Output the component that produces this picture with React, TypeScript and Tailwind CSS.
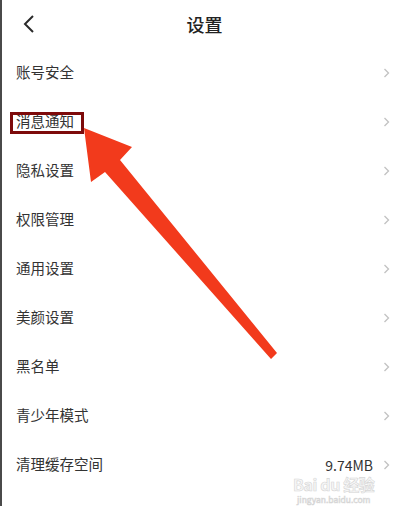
const items = [
  "账号安全",
  "消息通知",
  "隐私设置",
  "权限管理",
  "通用设置",
  "美颜设置",
  "黑名单",
  "青少年模式",
  "清理缓存空间",
  "关于我们",
];

function Chevron() {
  return (
    <svg width="7" height="10" viewBox="0 0 7 10" className="shrink-0">
      <path d="M1.5 1 L5.5 5 L1.5 9" fill="none" stroke="#c2c2c2" strokeWidth="1.3" />
    </svg>
  );
}

export default function App() {
  return (
    <div
      className="relative w-[407px] h-[506px] overflow-hidden bg-white border-l-2 border-[#4a4a4a] text-[#333]"
      style={{ fontFamily: '"Noto Sans CJK SC", "Noto Sans", sans-serif' }}
    >
      {/* header */}
      <div className="relative h-[48px] flex items-center justify-center">
        <svg width="14" height="20" viewBox="0 0 14 20" className="absolute left-[20px] top-[14px]">
          <path d="M11 2 L3 10 L11 18" fill="none" stroke="#2a2a2a" strokeWidth="2" />
        </svg>
        <span className="text-[18px] font-medium text-[#222] pt-[1px]">设置</span>
      </div>

      {/* list */}
      <div className="flex flex-col">
        {items.map((label) => (
          <div key={label} className="h-[49px] flex items-center justify-between pl-[14px] pr-[17px]">
            <span className="text-[14.5px] leading-none">{label}</span>
            <div className="flex items-center gap-[10px]">
              {label === "清理缓存空间" && <span className="text-[14px] leading-none text-[#333]">9.74MB</span>}
              <Chevron />
            </div>
          </div>
        ))}
      </div>

      {/* watermark */}
      <div className="absolute left-[291px] top-[476px] flex flex-col items-center gap-[3px] text-[#f6f6f6] pointer-events-none [-webkit-text-stroke:0.6px_#d6d6d6]">
        <span className="block text-[16px] leading-[16px] font-bold tracking-tight">Bai du 经验</span>
        <span className="block text-[8.5px] leading-[9px]">jingyan.baidu.com</span>
      </div>

      {/* highlight box */}
      <div className="absolute left-[8px] top-[112px] w-[74px] h-[22px] border-[3px] border-[#7d0a0a]" />

      {/* arrow */}
      <svg width="407" height="506" className="absolute left-0 top-0 pointer-events-none">
        <polygon
          points="82,128 130,147 118,160 275,353 269,359 103,172 89,182"
          fill="#f23a1c"
        />
      </svg>
    </div>
  );
}
